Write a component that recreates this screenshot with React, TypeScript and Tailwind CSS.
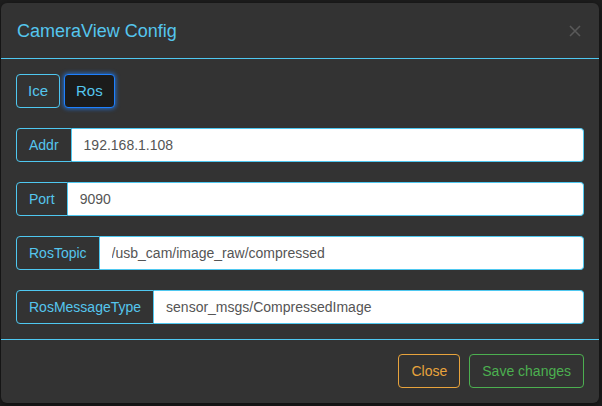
import { useState } from "react";

type Field = {
  label: string;
  value: string;
};

const fields: Field[] = [
  { label: "Addr", value: "192.168.1.108" },
  { label: "Port", value: "9090" },
  { label: "RosTopic", value: "/usb_cam/image_raw/compressed" },
  { label: "RosMessageType", value: "sensor_msgs/CompressedImage" },
];

export default function App() {
  const [mode, setMode] = useState<string>("ros");

  return (
    <div className="w-[602px] h-[406px] bg-[#1e1e1e] pt-[3px] pl-[1px] font-['Liberation_Sans',Arial,sans-serif] overflow-hidden">
      <div className="w-[598px] h-[400px] bg-[#333333] rounded-[6px] shadow-[0_2px_8px_rgba(0,0,0,0.6)] flex flex-col">
        {/* header */}
        <div className="h-[56px] flex items-center justify-between pl-[16px] pr-[18px] border-b border-[#4fc8f0]">
          <h4 className="text-[18px] text-[#55c6ee] leading-none">CameraView Config</h4>
          <button className="leading-none">
            <svg width="12" height="12" viewBox="0 0 12 12" stroke="#595959" strokeWidth="1.6">
              <path d="M1 1 L11 11 M11 1 L1 11" />
            </svg>
          </button>
        </div>

        {/* body */}
        <div className="p-[15px] flex flex-col gap-[20px] border-b border-[#4fc8f0]">
          <div className="flex gap-[4px]">
            <button
              onClick={() => setMode("ice")}
              className={
                mode === "ice"
                  ? "h-[34px] px-[11px] rounded-[4px] border border-[#1e80ff] bg-[#1b1b1b] text-[15px] text-[#55c6ee] shadow-[0_0_4px_1px_rgba(30,128,255,0.7)]"
                  : "h-[34px] px-[11px] rounded-[4px] border border-[#4fc8f0] text-[15px] text-[#55c6ee]"
              }
            >
              Ice
            </button>
            <button
              onClick={() => setMode("ros")}
              className={
                mode === "ros"
                  ? "h-[34px] px-[11px] rounded-[4px] border border-[#1e80ff] bg-[#1b1b1b] text-[15px] text-[#55c6ee] shadow-[0_0_4px_1px_rgba(30,128,255,0.7)]"
                  : "h-[34px] px-[11px] rounded-[4px] border border-[#4fc8f0] text-[15px] text-[#55c6ee]"
              }
            >
              Ros
            </button>
          </div>

          {fields.map((f) => (
            <div key={f.label} className="flex h-[34px]">
              <span className="flex items-center px-[12px] text-[14px] text-[#55c6ee] bg-[#333333] border border-[#4fc8f0] rounded-l-[4px]">
                {f.label}
              </span>
              <input
                defaultValue={f.value}
                className="flex-1 min-w-0 px-[12px] text-[14px] text-[#555555] bg-white border border-l-0 border-[#4fc8f0] rounded-r-[4px] outline-none"
              />
            </div>
          ))}
        </div>

        {/* footer */}
        <div className="flex-1 flex items-center justify-end gap-[9px] pr-[15px] pb-[1px]">
          <button className="h-[34px] px-[12px] rounded-[4px] border border-[#e8a33c] text-[14px] text-[#e8a33c]">
            Close
          </button>
          <button className="h-[34px] px-[12px] rounded-[4px] border border-[#4caf50] text-[14px] text-[#4caf50]">
            Save changes
          </button>
        </div>
      </div>
    </div>
  );
}
